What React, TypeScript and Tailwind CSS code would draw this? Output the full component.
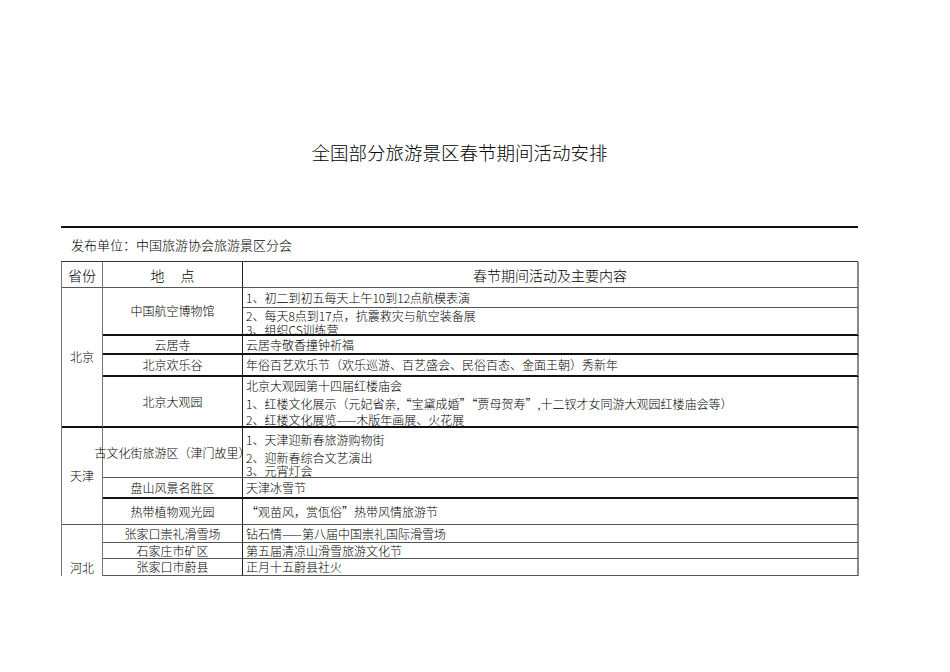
const FONT = "font-['Noto_Sans_CJK_SC','Noto_Sans',sans-serif] font-light";

const C1 = "border-r border-r-[#777]";
const C2 = "border-r border-r-[#222]";
const C3 = "border-r-2 border-r-[#888]";
const THIN = "border-b border-b-[#555]";
const THICK = "border-b-2 border-b-[#111]";
const CENTER = "flex items-center justify-center whitespace-nowrap";
const LEFT = "flex items-center pl-[3px] whitespace-nowrap";

export default function App() {
  return (
    <div className={`min-h-[672px] w-[950px] bg-white text-black ${FONT}`}>
      <div className="ml-[61px] w-[797px] pt-[140px]">
        <div className="h-[24px] text-center text-[18.5px] leading-[24px]">
          全国部分旅游景区春节期间活动安排
        </div>
        <div className="mt-[62px] border-t-2 border-t-[#111]" />
        <div className="flex h-[33px] items-center pl-[10px] text-[13px]">
          发布单位：中国旅游协会旅游景区分会
        </div>

        <div className="grid grid-cols-[41px_140px_616px] grid-rows-[26px_20px_28px_19px_22px_51px_50px_21px_26px_18px_16px_17px] border-t border-l border-t-[#333] border-l-[#777] text-[12px] leading-[14px]">
          {/* header */}
          <div className={`col-start-1 row-start-1 ${CENTER} ${C1} ${THIN} text-[14px]`}>省份</div>
          <div className={`col-start-2 row-start-1 ${CENTER} ${C2} ${THIN} gap-[16px] text-[14px]`}>
            <span>地</span>
            <span>点</span>
          </div>
          <div className={`col-start-3 row-start-1 ${CENTER} ${C3} ${THIN} text-[14px]`}>春节期间活动及主要内容</div>

          {/* province column */}
          <div className={`col-start-1 row-start-2 row-span-5 ${CENTER} ${C1} ${THICK}`}>北京</div>
          <div className={`col-start-1 row-start-7 row-span-3 ${CENTER} ${C1} ${THIN}`}>天津</div>
          <div className={`col-start-1 row-start-10 row-span-3 flex items-end justify-center pb-[1px] ${C1}`}>河北</div>

          {/* place column */}
          <div className={`col-start-2 row-start-2 row-span-2 ${CENTER} ${C2} ${THICK}`}>中国航空博物馆</div>
          <div className={`col-start-2 row-start-4 ${CENTER} ${C2} ${THICK}`}>云居寺</div>
          <div className={`col-start-2 row-start-5 ${CENTER} ${C2} ${THICK}`}>北京欢乐谷</div>
          <div className={`col-start-2 row-start-6 ${CENTER} ${C2} ${THICK}`}>北京大观园</div>
          <div className={`col-start-2 row-start-7 ${CENTER} ${C2} ${THIN}`}>古文化街旅游区（津门故里）</div>
          <div className={`col-start-2 row-start-8 ${CENTER} ${C2} ${THICK}`}>盘山风景名胜区</div>
          <div className={`col-start-2 row-start-9 ${CENTER} ${C2} ${THIN}`}>热带植物观光园</div>
          <div className={`col-start-2 row-start-10 ${CENTER} ${C2} ${THIN}`}>张家口崇礼滑雪场</div>
          <div className={`col-start-2 row-start-11 ${CENTER} ${C2} ${THIN}`}>石家庄市矿区</div>
          <div className={`col-start-2 row-start-12 ${CENTER} ${C2} ${THIN}`}>张家口市蔚县</div>

          {/* content column */}
          <div className={`col-start-3 row-start-2 ${LEFT} ${C3} ${THIN}`}>1、初二到初五每天上午10到12点航模表演</div>
          <div className={`col-start-3 row-start-3 flex flex-col pl-[3px] whitespace-nowrap ${C3} ${THICK}`}>
            <div className="h-[15px] leading-[16px]">2、每天8点到17点，抗震救灾与航空装备展</div>
            <div className="h-[11px] leading-[13px]">3、组织CS训练营</div>
          </div>
          <div className={`col-start-3 row-start-4 ${LEFT} ${C3} ${THICK}`}>云居寺敬香撞钟祈福</div>
          <div className={`col-start-3 row-start-5 ${LEFT} ${C3} ${THICK}`}>年俗百艺欢乐节（欢乐巡游、百艺盛会、民俗百态、金面王朝）秀新年</div>
          <div className={`col-start-3 row-start-6 flex flex-col pl-[3px] whitespace-nowrap ${C3} ${THICK}`}>
            <div className="h-[18px] leading-[18px]">北京大观园第十四届红楼庙会</div>
            <div className="h-[18px] leading-[18px]">1、红楼文化展示（元妃省亲,“宝黛成婚”“贾母贺寿”,十二钗才女同游大观园红楼庙会等）</div>
            <div className="h-[13px] leading-[14px]">2、红楼文化展览——木版年画展、火花展</div>
          </div>
          <div className={`col-start-3 row-start-7 flex flex-col pl-[3px] pt-[3px] whitespace-nowrap ${C3} ${THIN}`}>
            <div className="h-[18px] leading-[18px]">1、天津迎新春旅游购物街</div>
            <div className="h-[15px] leading-[18px]">2、迎新春综合文艺演出</div>
            <div className="h-[12px] leading-[14px]">3、元宵灯会</div>
          </div>
          <div className={`col-start-3 row-start-8 ${LEFT} ${C3} ${THICK}`}>天津冰雪节</div>
          <div className={`col-start-3 row-start-9 ${LEFT} ${C3} ${THIN}`}>“观苗风，赏佤俗”热带风情旅游节</div>
          <div className={`col-start-3 row-start-10 ${LEFT} ${C3} ${THIN}`}>钻石情——第八届中国崇礼国际滑雪场</div>
          <div className={`col-start-3 row-start-11 ${LEFT} ${C3} ${THIN}`}>第五届清凉山滑雪旅游文化节</div>
          <div className={`col-start-3 row-start-12 ${LEFT} ${C3} ${THIN}`}>正月十五蔚县社火</div>
        </div>
      </div>
    </div>
  );
}
